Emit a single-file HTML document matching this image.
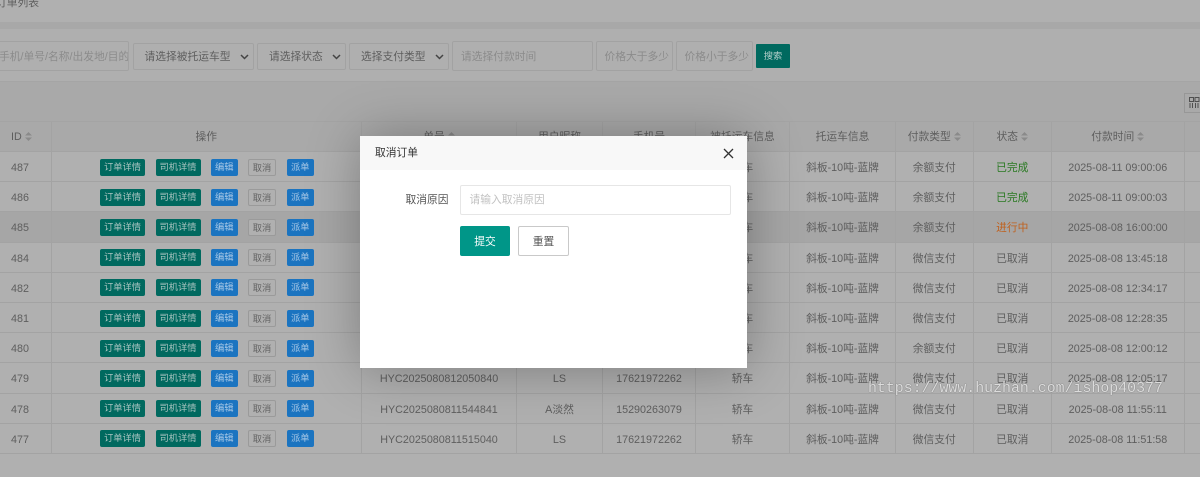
<!DOCTYPE html>
<html lang="zh-CN">
<head>
<meta charset="utf-8">
<title>订单列表</title>
<style>
html,body{margin:0;padding:0;width:1200px;height:477px;overflow:hidden;background:#b0b0b0}
*{box-sizing:border-box}
body{font-family:"Liberation Sans","Noto Sans CJK SC",sans-serif;font-size:10.75px;color:#5e5e5e}
#wrap{position:absolute;left:0;top:0;width:1200px;height:477px;overflow:hidden;filter:blur(.35px)}
.a{position:absolute}
.f{position:absolute;border:1px solid #a2a2a2;border-radius:2px;white-space:nowrap;overflow:hidden;line-height:27px}
.ph{color:#8b8b8b;line-height:31px}
.sel{color:#5e5e5e;padding-left:11px}
.sel svg{position:absolute;right:4px;top:10px}
.row,.head{position:absolute;left:0;width:1200px;display:flex;border-bottom:1px solid #a3a3a3}
.head{top:121px;height:31px;background:#a9a9a9;border-top:1px solid #a4a4a4;line-height:30px}
.row{height:30.2px;line-height:29.5px;background:#b0b0b0}
.row.h{background:#a6a6a6}
.row>div{padding-top:2px}
.row>div,.head>div{flex:none;text-align:center;border-right:1px solid #a3a3a3;white-space:nowrap;overflow:hidden}
.row>div:nth-child(1),.head>div:nth-child(1){width:51.5px}
.row>div:nth-child(2),.head>div:nth-child(2){width:310.5px}
.row>div:nth-child(3),.head>div:nth-child(3){width:155px}
.row>div:nth-child(4),.head>div:nth-child(4){width:86px}
.row>div:nth-child(5),.head>div:nth-child(5){width:93px}
.row>div:nth-child(6),.head>div:nth-child(6){width:94px}
.row>div:nth-child(7),.head>div:nth-child(7){width:106px}
.row>div:nth-child(8),.head>div:nth-child(8){width:77.5px}
.row>div:nth-child(9),.head>div:nth-child(9){width:78.5px}
.row>div:nth-child(10),.head>div:nth-child(10){width:132.5px}
.row>div:nth-child(11),.head>div:nth-child(11){width:16px;border-right:0}
.row>div:nth-child(1){text-align:left;padding-left:11px}
.b{position:absolute;top:6.5px;height:17px;line-height:17px;font-size:9.25px;text-align:center;border-radius:2px;color:#a9c4c0;border:0}
.b1{left:100px;width:45px;background:#00695f}
.b2{left:155.5px;width:45px;background:#00695f}
.b3{left:211px;width:26.5px;background:#1b74c0;color:#a8c8e6}
.b4{left:248px;width:28px;background:#b0b0b0;border:1px solid #9a9a9a;color:#626262;line-height:16px}
.b5{left:287px;width:26.5px;background:#1b74c0;color:#a8c8e6}
.s{display:inline-block;vertical-align:middle;margin-left:3px;margin-top:-2px}
.g{color:#2a7a22}
.o{color:#c0601c}
#dlg{position:absolute;left:360px;top:136px;width:386.5px;height:232px;background:#fff;box-shadow:1px 1px 50px rgba(0,0,0,.3)}
#dh{position:absolute;left:0;top:0;width:100%;height:34px;background:#f8f8f8;color:#333;line-height:35px;padding-left:15px}
#wm{position:absolute;left:868px;top:380px;font-family:"Liberation Mono","DejaVu Sans Mono",monospace;font-size:14.9px;line-height:18px;color:#dcdcdc;white-space:nowrap;text-shadow:0 0 1px #555;z-index:5}
</style>
</head>
<body>
<div id="wrap">
  <!-- page bands -->
  <div class="a" style="left:-4px;top:-5px;line-height:16px;color:#5e5e5e">订单列表</div>
  <div class="a" style="left:0;top:22px;width:1200px;height:7px;background:#a8a8a8"></div>
  <div class="a" style="left:0;top:29px;width:1200px;height:53px;background:#afafaf;border-bottom:1px solid #a5a5a5"></div>
  <div class="a" style="left:0;top:82px;width:1200px;height:39px;background:#a9a9a9"></div>

  <!-- filters -->
  <div class="f ph" style="left:-10px;top:41px;width:139px;height:29.5px;padding-left:8px">手机/单号/名称/出发地/目的</div>
  <div class="f sel" style="left:132.5px;top:42.5px;width:121px;height:27px;line-height:27px">请选择被托运车型<svg width="9" height="6" viewBox="0 0 9 6"><path d="M1 1l3.500 3.500L8 1" fill="none" stroke="#444" stroke-width="1.500"/></svg></div>
  <div class="f sel" style="left:257px;top:42.5px;width:88.500px;height:27px;line-height:27px">请选择状态<svg width="9" height="6" viewBox="0 0 9 6"><path d="M1 1l3.500 3.500L8 1" fill="none" stroke="#444" stroke-width="1.500"/></svg></div>
  <div class="f sel" style="left:349px;top:42.5px;width:99.500px;height:27px;line-height:27px">选择支付类型<svg width="9" height="6" viewBox="0 0 9 6"><path d="M1 1l3.500 3.500L8 1" fill="none" stroke="#444" stroke-width="1.500"/></svg></div>
  <div class="f ph" style="left:452px;top:41px;width:140.500px;height:29.5px;padding-left:8px">请选择付款时间</div>
  <div class="f ph" style="left:595.5px;top:41px;width:77px;height:29.5px;padding-left:8px">价格大于多少</div>
  <div class="f ph" style="left:675.5px;top:41px;width:77px;height:29.5px;padding-left:8px">价格小于多少</div>
  <div class="a" style="left:756px;top:44px;width:34px;height:23.500px;background:#00695f;border-radius:1px;color:#b4cfcb;font-size:9.250px;line-height:24px;text-align:center">搜索</div>

  <!-- column toggle -->
  <div class="a" style="left:1184px;top:93px;width:24px;height:19.500px;border:1px solid #979797"></div>
  <svg class="a" style="left:1189px;top:97px" width="11" height="12" viewBox="0 0 11 12"><path d="M.5.5h4v4h-4zM6 .5h4v4H6zM1 6v5M3.500 6v5M6.500 6v5M9 6v5" fill="none" stroke="#4f4f4f" stroke-width="1"/></svg>

  <!-- header -->
  <div class="head">
    <div style="text-align:left;padding-left:11px">ID<svg class="s" width="7" height="9" viewBox="0 0 7 9"><path d="M3.500 0L7 3.500H0zM3.500 9L0 5.500h7z" fill="#8a8a8a"/></svg></div>
    <div>操作</div>
    <div>单号<svg class="s" width="7" height="9" viewBox="0 0 7 9"><path d="M3.500 0L7 3.500H0zM3.500 9L0 5.500h7z" fill="#8a8a8a"/></svg></div>
    <div>用户昵称</div>
    <div>手机号</div>
    <div>被托运车信息</div>
    <div>托运车信息</div>
    <div>付款类型<svg class="s" width="7" height="9" viewBox="0 0 7 9"><path d="M3.500 0L7 3.500H0zM3.500 9L0 5.500h7z" fill="#8a8a8a"/></svg></div>
    <div>状态<svg class="s" width="7" height="9" viewBox="0 0 7 9"><path d="M3.500 0L7 3.500H0zM3.500 9L0 5.500h7z" fill="#8a8a8a"/></svg></div>
    <div>付款时间<svg class="s" width="7" height="9" viewBox="0 0 7 9"><path d="M3.500 0L7 3.500H0zM3.500 9L0 5.500h7z" fill="#8a8a8a"/></svg></div>
    <div></div>
  </div>

  <!-- rows -->
  <div class="row" style="top:152px"><div>487</div><div></div><div>HYC2025081109000600</div><div>LS</div><div>17621972262</div><div>轿车</div><div>斜板-10吨-蓝牌</div><div>余额支付</div><div class="g">已完成</div><div>2025-08-11 09:00:06</div><div></div><span class="b b1">订单详情</span><span class="b b2">司机详情</span><span class="b b3">编辑</span><span class="b b4">取消</span><span class="b b5">派单</span></div>
  <div class="row" style="top:182.2px"><div>486</div><div></div><div>HYC2025081109000300</div><div>LS</div><div>17621972262</div><div>轿车</div><div>斜板-10吨-蓝牌</div><div>余额支付</div><div class="g">已完成</div><div>2025-08-11 09:00:03</div><div></div><span class="b b1">订单详情</span><span class="b b2">司机详情</span><span class="b b3">编辑</span><span class="b b4">取消</span><span class="b b5">派单</span></div>
  <div class="row h" style="top:212.4px"><div>485</div><div></div><div>HYC2025080816000000</div><div>LS</div><div>17621972262</div><div>轿车</div><div>斜板-10吨-蓝牌</div><div>余额支付</div><div class="o">进行中</div><div>2025-08-08 16:00:00</div><div></div><span class="b b1">订单详情</span><span class="b b2">司机详情</span><span class="b b3">编辑</span><span class="b b4">取消</span><span class="b b5">派单</span></div>
  <div class="row" style="top:242.6px"><div>484</div><div></div><div>HYC2025080813451800</div><div>LS</div><div>17621972262</div><div>轿车</div><div>斜板-10吨-蓝牌</div><div>微信支付</div><div>已取消</div><div>2025-08-08 13:45:18</div><div></div><span class="b b1">订单详情</span><span class="b b2">司机详情</span><span class="b b3">编辑</span><span class="b b4">取消</span><span class="b b5">派单</span></div>
  <div class="row" style="top:272.8px"><div>482</div><div></div><div>HYC2025080812341700</div><div>LS</div><div>17621972262</div><div>轿车</div><div>斜板-10吨-蓝牌</div><div>微信支付</div><div>已取消</div><div>2025-08-08 12:34:17</div><div></div><span class="b b1">订单详情</span><span class="b b2">司机详情</span><span class="b b3">编辑</span><span class="b b4">取消</span><span class="b b5">派单</span></div>
  <div class="row" style="top:303px"><div>481</div><div></div><div>HYC2025080812283500</div><div>LS</div><div>17621972262</div><div>轿车</div><div>斜板-10吨-蓝牌</div><div>微信支付</div><div>已取消</div><div>2025-08-08 12:28:35</div><div></div><span class="b b1">订单详情</span><span class="b b2">司机详情</span><span class="b b3">编辑</span><span class="b b4">取消</span><span class="b b5">派单</span></div>
  <div class="row" style="top:333.2px"><div>480</div><div></div><div>HYC2025080812001200</div><div>LS</div><div>17621972262</div><div>轿车</div><div>斜板-10吨-蓝牌</div><div>余额支付</div><div>已取消</div><div>2025-08-08 12:00:12</div><div></div><span class="b b1">订单详情</span><span class="b b2">司机详情</span><span class="b b3">编辑</span><span class="b b4">取消</span><span class="b b5">派单</span></div>
  <div class="row" style="top:363.4px"><div>479</div><div></div><div>HYC2025080812050840</div><div>LS</div><div>17621972262</div><div>轿车</div><div>斜板-10吨-蓝牌</div><div>微信支付</div><div>已取消</div><div>2025-08-08 12:05:17</div><div></div><span class="b b1">订单详情</span><span class="b b2">司机详情</span><span class="b b3">编辑</span><span class="b b4">取消</span><span class="b b5">派单</span></div>
  <div class="row" style="top:393.6px"><div>478</div><div></div><div>HYC2025080811544841</div><div>A淡然</div><div>15290263079</div><div>轿车</div><div>斜板-10吨-蓝牌</div><div>微信支付</div><div>已取消</div><div>2025-08-08 11:55:11</div><div></div><span class="b b1">订单详情</span><span class="b b2">司机详情</span><span class="b b3">编辑</span><span class="b b4">取消</span><span class="b b5">派单</span></div>
  <div class="row" style="top:423.8px"><div>477</div><div></div><div>HYC2025080811515040</div><div>LS</div><div>17621972262</div><div>轿车</div><div>斜板-10吨-蓝牌</div><div>微信支付</div><div>已取消</div><div>2025-08-08 11:51:58</div><div></div><span class="b b1">订单详情</span><span class="b b2">司机详情</span><span class="b b3">编辑</span><span class="b b4">取消</span><span class="b b5">派单</span></div>

  <!-- dialog -->
  <div id="dlg">
    <div id="dh">取消订单</div>
    <svg class="a" style="left:362.5px;top:12px" width="11" height="11" viewBox="0 0 11 11"><path d="M1 1l9 9M10 1l-9 9" fill="none" stroke="#333" stroke-width="1.300"/></svg>
    <div class="a" style="left:45.5px;top:56px;line-height:17px;color:#555">取消原因</div>
    <div class="a" style="left:100px;top:49px;width:271px;height:29.500px;border:1px solid #e6e6e6;border-radius:2px;padding-left:8.500px;line-height:29px;color:#c2c2c2">请输入取消原因</div>
    <div class="a" style="left:100px;top:90px;width:50px;height:29.500px;background:#009688;border-radius:2px;color:#fff;text-align:center;line-height:32px">提交</div>
    <div class="a" style="left:158px;top:90px;width:51px;height:29.500px;background:#fff;border:1px solid #c9c9c9;border-radius:2px;color:#555;text-align:center;line-height:30px">重置</div>
  </div>

  <div id="wm">https://www.huzhan.com/ishop40377</div>
</div>
</body>
</html>
